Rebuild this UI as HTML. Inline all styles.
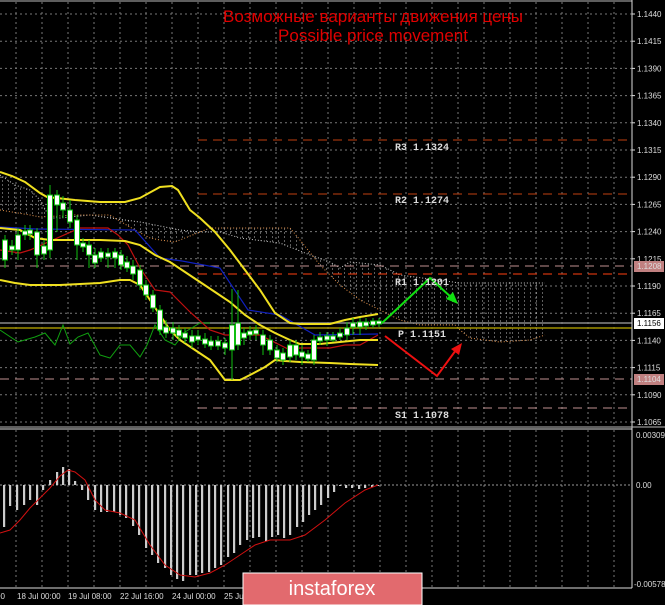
<!DOCTYPE html>
<html><head><meta charset="utf-8"><style>
html,body{margin:0;padding:0;background:#000;width:665px;height:605px;overflow:hidden}
svg{display:block}
.ax{font-family:"Liberation Sans",sans-serif;font-size:8px;fill:#ddd}
.lv{font-family:"Liberation Mono",monospace;font-size:10px;fill:#ddd;font-weight:bold}
</style></head><body>
<svg id="s" width="665" height="605" viewBox="0 0 665 605" xmlns="http://www.w3.org/2000/svg">
<defs>
<pattern id="hatch" width="6" height="4" patternUnits="userSpaceOnUse">
<rect x="2" y="0" width="1" height="2" fill="#bbb"/>
</pattern>
</defs>
<rect width="665" height="605" fill="#000"/>
<g id="grid"></g>
<polygon points="0,175 15,185 30,190 40,200 50,218 60,218 90,215 110,218 140,222 180,230 200,232 220,232 240,238 280,243 310,255 330,262 340,268 350,262 380,265 400,275 460,283 545,283 545,335 530,340 500,342 470,338 460,330 455,325 420,325 400,320 380,310 360,300 340,285 320,265 300,240 290,228 210,228 175,242 160,240 150,238 135,230 118,220 110,215 75,215 40,217 30,215 0,210" fill="url(#hatch)" opacity="0.5"/>
<polyline points="0,175 15,185 30,190 40,200 50,218 60,218 90,215 110,218 140,222 180,230 200,232 220,232 240,238 280,243 310,255 330,262 340,268 350,262 380,265 400,275 460,283 545,283" fill="none" stroke="#ccc" stroke-width="1" stroke-dasharray="1,2"/>
<polyline points="0,210 30,215 40,217 75,215 110,215 118,220 135,230 150,238 160,240 175,242 210,228 290,228 300,240 320,265 340,285 360,300 380,310 400,320 420,325 455,325 460,330 470,338 500,342 530,340 545,335" fill="none" stroke="#e0904a" stroke-width="1" stroke-dasharray="1,2"/>
<line x1="198" y1="140" x2="632" y2="140" stroke="#c04010" stroke-dasharray="9,6"/>
<line x1="198" y1="194" x2="632" y2="194" stroke="#c04010" stroke-dasharray="9,6"/>
<line x1="0" y1="266" x2="632" y2="266" stroke="#c09090" stroke-dasharray="9,6"/>
<line x1="198" y1="274" x2="632" y2="274" stroke="#ff4010" stroke-dasharray="9,6"/>
<line x1="0" y1="323" x2="632" y2="323" stroke="#888" stroke-width="1.5"/>
<line x1="0" y1="328" x2="632" y2="328" stroke="#a09000" stroke-width="1.5"/>
<line x1="0" y1="379" x2="632" y2="379" stroke="#c09090" stroke-dasharray="9,6"/>
<line x1="198" y1="408" x2="632" y2="408" stroke="#c09090" stroke-dasharray="9,6"/>
<polyline points="0,330 18,342 35,337 45,333 55,345 63,325 70,344 78,337 88,333 100,355 110,358 120,345 130,345 140,357 147,345 155,325 165,340 175,345 185,332 200,323 210,323" fill="none" stroke="#10a010" stroke-width="1"/>
<polyline points="0,227 36,229 135,230 160,258 182,261 220,268 248,310 280,315 315,335 378,334" fill="none" stroke="#1020c0" stroke-width="1.2"/>
<polyline points="0,250 20,253 30,250 80,228 108,228 118,235 128,245 140,268 155,290 170,292 190,312 210,330 225,335 260,335 280,345 290,350 300,348 330,348 345,345 360,345 378,335" fill="none" stroke="#c01010" stroke-width="1.2"/>
<polyline points="0,172 12,176 25,182 40,193 47,197 75,200 100,202 125,202 140,198 160,187 172,186 178,190 190,210 200,218 215,232 230,250 245,270 260,290 275,313 290,323 300,324 330,324 345,320 360,317 378,314" fill="none" stroke="#f0e020" stroke-width="2"/>
<polyline points="0,228 20,230 35,238 50,240 100,240 125,241 140,245 155,255 170,262 185,272 200,282 215,292 230,302 245,315 260,325 275,333 290,340 300,344 320,344 340,342 360,340 378,340" fill="none" stroke="#f0e020" stroke-width="2"/>
<polyline points="0,280 15,283 30,285 60,285 100,283 120,280 130,280 140,285 150,300 160,315 170,330 180,340 195,350 210,360 225,380 240,380 250,375 265,367 275,360 285,361 300,362 330,363 350,364 378,365" fill="none" stroke="#f0e020" stroke-width="2"/>
<g id="candles"></g>
<polyline points="382,323 430,278 452,298" fill="none" stroke="#10e010" stroke-width="2"/>
<polygon points="458,304 446,299 453,292" fill="#10e010"/>
<polyline points="385,336 437,376 456,350" fill="none" stroke="#ee1010" stroke-width="2"/>
<polygon points="462,343 451,349 459,355" fill="#ee1010"/>
<text class="lv" x="395" y="150">R3 1.1324</text>
<text class="lv" x="395" y="203">R2 1.1274</text>
<text class="lv" x="395" y="285">R1 1.1201</text>
<text class="lv" x="398" y="337">P 1.1151</text>
<text class="lv" x="395" y="418">S1 1.1078</text>
<text x="373" y="22" text-anchor="middle" font-family="Liberation Sans,sans-serif" font-size="17" fill="#e00000">Возможные варианты движения цены</text>
<text x="373" y="41" text-anchor="middle" font-family="Liberation Sans,sans-serif" font-size="17" fill="#e00000">Possible price movement</text>
<line x1="0" y1="1" x2="632" y2="1" stroke="#bbb"/>
<line x1="632" y1="0" x2="632" y2="588" stroke="#ddd"/>
<line x1="0" y1="427" x2="665" y2="427" stroke="#bbb"/>
<line x1="0" y1="429" x2="632" y2="429" stroke="#ddd"/>
<line x1="0" y1="588" x2="632" y2="588" stroke="#ddd"/>
<line x1="0" y1="485" x2="632" y2="485" stroke="#999" stroke-dasharray="2,2"/>
<g id="hist"></g>
<polyline points="0,533 10,530 20,520 30,508 40,498 50,488 60,476 68,470 75,472 85,480 95,500 105,510 120,513 135,520 150,545 165,565 180,575 195,577 210,573 225,565 240,555 255,545 270,540 290,540 305,535 325,520 345,503 365,490 378,485" fill="none" stroke="#d01010" stroke-width="1"/>
<g id="axl"></g>
<rect x="634" y="261" width="30" height="11" fill="#c08080"/>
<text class="ax" x="637" y="269" fill="#fff">1.1208</text>
<rect x="634" y="318" width="30" height="11" fill="#fff"/>
<text class="ax" x="637" y="326" style="fill:#000">1.1156</text>
<rect x="634" y="374" width="30" height="11" fill="#c08080"/>
<text class="ax" x="637" y="382">1.1104</text>
<text class="ax" x="636" y="438">0.00309</text>
<text class="ax" x="636" y="488">0.00</text>
<text class="ax" x="634" y="587">-0.00578</text>
<text class="ax" x="-4" y="599">00</text>
<text class="ax" x="17" y="599">18 Jul 00:00</text>
<text class="ax" x="68" y="599">19 Jul 08:00</text>
<text class="ax" x="120" y="599">22 Jul 16:00</text>
<text class="ax" x="172" y="599">24 Jul 00:00</text>
<text class="ax" x="224" y="599">25 Jul</text>
<rect x="243" y="573" width="179" height="32" fill="#e26a6e" stroke="#fff" stroke-width="1"/>
<text x="332" y="595" text-anchor="middle" font-family="Liberation Sans,sans-serif" font-size="20" fill="#fff">instaforex</text>
</svg>
<script>
var NS="http://www.w3.org/2000/svg";
function el(p,t,a){var e=document.createElementNS(NS,t);for(var k in a)e.setAttribute(k,a[k]);p.appendChild(e);return e;}
var g=document.getElementById("grid");
for(var x=16;x<632;x+=26)el(g,"line",{x1:x,y1:2,x2:x,y2:426,stroke:"#777","stroke-dasharray":"2,3"});
for(var x=16;x<632;x+=26)el(g,"line",{x1:x,y1:430,x2:x,y2:587,stroke:"#777","stroke-dasharray":"2,3"});
var ax=document.getElementById("axl");
var prices=["1.1440","1.1415","1.1390","1.1365","1.1340","1.1315","1.1290","1.1265","1.1240","1.1215","1.1190","1.1165","1.1140","1.1115","1.1090","1.1065"];
for(var i=0;i<prices.length;i++){var y=14+i*27.2;
el(g,"line",{x1:0,y1:y,x2:632,y2:y,stroke:"#777","stroke-dasharray":"2,3"});
el(ax,"line",{x1:632,y1:y,x2:635,y2:y,stroke:"#ddd"});
var t=el(ax,"text",{x:637,y:y+3,"class":"ax"});t.textContent=prices[i];}
var c=[[5,240,260,235,268],[12,246,250,240,255],[18,235,250,228,260],[25,231,235,225,240],[30,230,234,225,240],[37,232,255,228,268],[44,246,254,240,260],[50,195,250,185,258],[57,195,205,190,232],[63,203,210,196,218],[70,210,222,200,228],[77,220,245,215,260],[83,243,247,238,252],[89,245,255,240,268],[95,255,263,248,268],[101,252,258,248,262],[108,253,257,248,268],[115,252,258,248,268],[121,255,265,250,270],[127,262,268,256,272],[133,266,274,260,280],[140,270,285,265,290],[146,285,295,280,300],[153,295,308,290,312],[160,310,330,305,335],[166,327,333,320,338],[173,328,333,322,340],[179,330,336,325,340],[185,333,338,328,343],[192,336,342,330,348],[198,336,340,330,345],[205,339,344,333,348],[211,341,346,336,350],[218,341,346,336,350],[225,343,348,338,355],[232,325,350,289,380],[238,323,345,290,350],[244,333,338,328,345],[250,331,335,326,340],[256,330,334,325,340],[263,335,345,330,355],[270,340,350,335,355],[277,350,358,345,362],[283,353,360,348,365],[290,345,357,340,362],[296,345,355,340,360],[302,352,357,345,365],[308,354,359,350,362],[314,340,360,335,365],[320,337,341,332,345],[327,336,340,332,346],[333,336,340,332,342],[340,333,337,328,340],[347,328,335,322,340],[353,323,327,318,335],[360,322,327,318,335],[366,322,326,318,330],[373,321,325,318,328],[379,321,324,318,327]];
var cg=document.getElementById("candles");
c.forEach(function(d){el(cg,"line",{x1:d[0],y1:d[3],x2:d[0],y2:d[4],stroke:"#10c010"});
var t=Math.min(d[1],d[2]),h=Math.max(2,Math.abs(d[2]-d[1]));
el(cg,"rect",{x:d[0]-2.5,y:t,width:5,height:h,fill:"#fff",stroke:"#10c010","stroke-width":1});});
var hv=[[4,527],[10,506],[17,510],[24,505],[30,500],[37,505],[43,490],[50,480],[57,472],[63,467],[69,469],[75,481],[82,490],[88,500],[95,510],[101,512],[107,512],[114,512],[120,515],[126,518],[133,526],[139,535],[146,548],[152,555],[158,563],[165,568],[171,575],[177,579],[183,581],[190,575],[196,575],[202,573],[209,572],[215,568],[221,565],[228,557],[234,553],[240,545],[247,540],[253,538],[259,537],[266,541],[272,537],[278,535],[284,538],[290,535],[297,527],[303,522],[309,515],[315,510],[321,505],[328,498],[334,492],[340,486],[346,488],[352,488],[359,489],[365,488],[372,487],[378,486]];
var hg=document.getElementById("hist");
hv.forEach(function(d){var y1=Math.min(485,d[1]),y2=Math.max(485,d[1]);
el(hg,"rect",{x:d[0]-1,y:y1,width:2.2,height:Math.max(1,y2-y1),fill:"#ccc"});});
</script>
</body></html>
